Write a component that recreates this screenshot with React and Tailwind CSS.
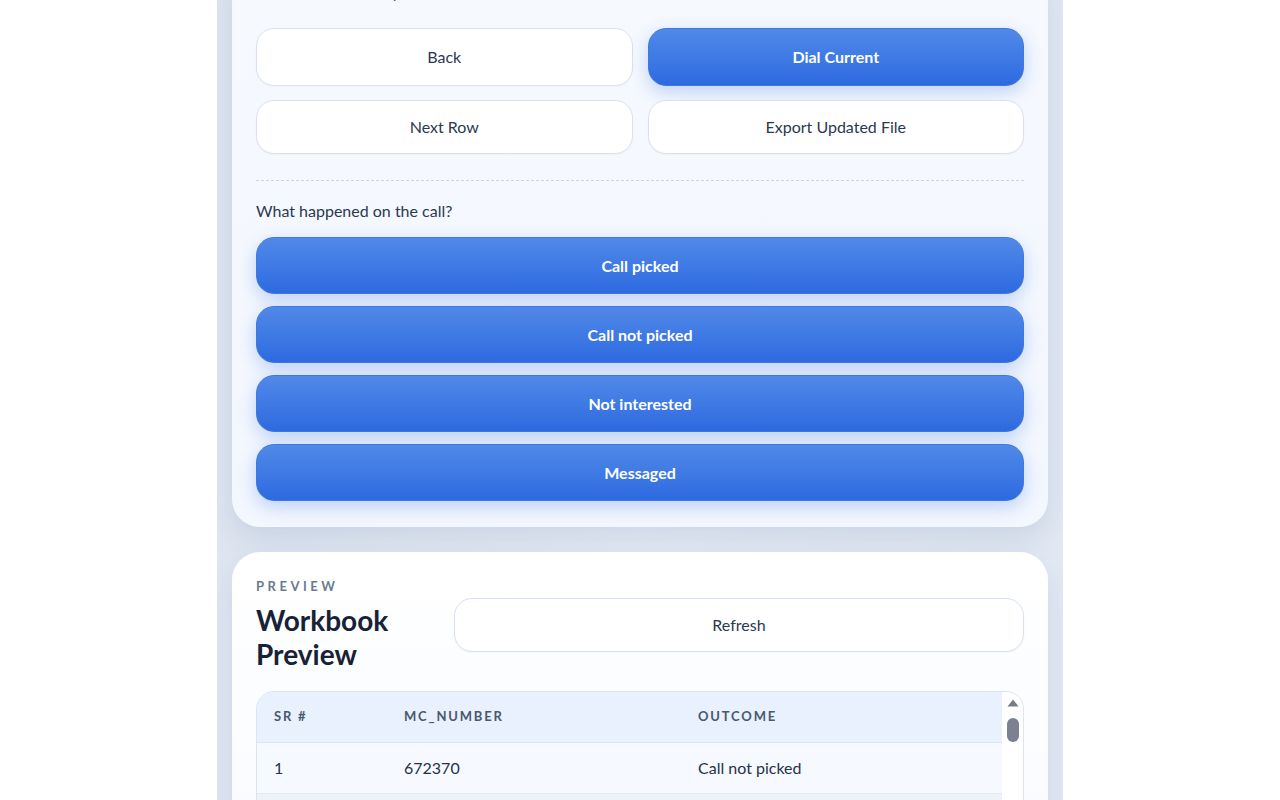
export default function App() {
  const outline =
    "flex items-center justify-center rounded-[18px] border border-[#d8e1ee] bg-white text-base text-[#2b3950] shadow-[0_1px_2px_rgba(30,50,90,0.04)]";
  const blue =
    "flex items-center justify-center rounded-[18px] border border-[#3f78e2] bg-linear-to-b from-[#5189e8] to-[#2d6ae0] text-base font-bold text-white shadow-[0_6px_18px_rgba(47,108,224,0.28)]";
  const outcomes = ["Call picked", "Call not picked", "Not interested", "Messaged"];
  const rows = [
    ["1", "672370", "Call not picked"],
    ["2", "672371", ""],
    ["3", "672372", ""],
  ];
  return (
    <div className="flex min-h-screen justify-center bg-white font-[Lato,'Noto_Sans',sans-serif]">
      <div className="flex h-[800px] w-[846px] flex-col overflow-hidden bg-linear-to-r from-[#dfe6f1] via-[#e6ecf5] to-[#e2e9f3] px-[15px]">
        {/* Top card */}
        <div className="-mt-[44px] rounded-[28px] bg-linear-to-b from-[#f6f9fe] to-[#f3f7fe] px-6 pt-6 pb-[26px] shadow-[0_12px_30px_rgba(90,115,155,0.18)]">
          <p className="text-base leading-6 text-[#4b5a70]">Review the current plan</p>
          <div className="mt-6 grid grid-cols-2 gap-x-[15px] gap-y-[14px]">
            <button className={`${outline} h-[58px]`}>Back</button>
            <button className={`${blue} h-[58px]`}>Dial Current</button>
            <button className={`${outline} h-[54px]`}>Next Row</button>
            <button className={`${outline} h-[54px]`}>Export Updated File</button>
          </div>
          <div className="mt-[26px] border-t border-dashed border-[#ccd6e3]" />
          <p className="mt-[18px] text-base leading-6 text-[#2b3950]">What happened on the call?</p>
          <div className="mt-[14px] flex flex-col gap-3">
            {outcomes.map((o) => (
              <button key={o} className={`${blue} h-[57px]`}>
                {o}
              </button>
            ))}
          </div>
        </div>

        {/* Preview card */}
        <div className="mt-[25px] rounded-[28px] bg-linear-to-b from-white to-[#f7faff] px-6 pt-[26px] shadow-[0_12px_30px_rgba(90,115,155,0.14)]">
          <div className="flex items-center gap-4">
            <div className="w-[182px] shrink-0">
              <div className="text-[13px] font-bold uppercase leading-4 tracking-[0.27em] text-[#6b7a90]">Preview</div>
              <h2 className="mt-[9px] text-[28px] font-bold leading-[34px] text-[#172236]">Workbook Preview</h2>
            </div>
            <button className={`${outline} h-[54px] flex-1`}>Refresh</button>
          </div>

          <div className="mt-5 flex overflow-hidden rounded-[18px] border border-[#dbe4f0]">
            <div className="flex-1">
              <div className="grid h-[51px] grid-cols-[130px_294px_1fr] items-center border-b border-[#dbe5f1] bg-[#e8f1fd] text-[13px] font-bold uppercase tracking-[0.14em] text-[#4a586e]">
                <div className="pl-[17px]">SR #</div>
                <div className="pl-[17px]">MC_NUMBER</div>
                <div className="pl-[17px]">Outcome</div>
              </div>
              {rows.map((r, i) => (
                <div
                  key={r[0]}
                  className={`grid h-[51px] grid-cols-[130px_294px_1fr] items-center border-b border-[#e3eaf4] text-base text-[#253247] ${
                    i % 2 === 0 ? "bg-[#f6f9ff]" : "bg-[#edf2f9]"
                  }`}
                >
                  <div className="pl-[17px]">{r[0]}</div>
                  <div className="pl-[17px]">{r[1]}</div>
                  <div className="pl-[17px]">{r[2]}</div>
                </div>
              ))}
            </div>
            <div className="flex w-[21px] flex-col items-center bg-white pt-[7px]">
              <svg width="12" height="8" viewBox="0 0 12 8">
                <path d="M6 0.5 L11.5 7.5 L0.5 7.5 Z" fill="#767c88" />
              </svg>
              <div className="mt-[11px] h-[24px] w-[12px] rounded-full bg-[#7b8190]" />
            </div>
          </div>
        </div>
      </div>
    </div>
  );
}
